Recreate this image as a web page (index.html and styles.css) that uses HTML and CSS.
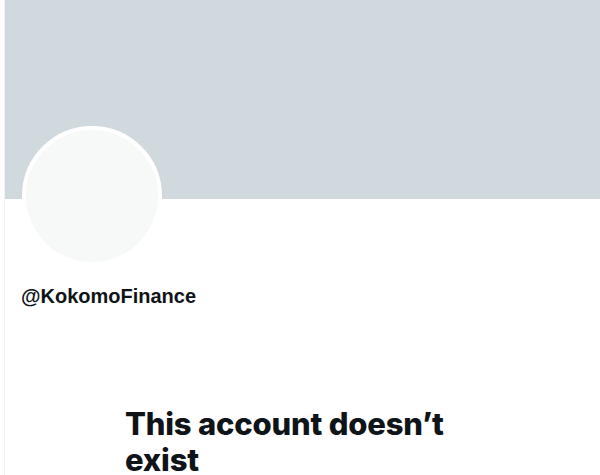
FILE: index.html
```html
<!DOCTYPE html>
<html lang="en">
<head>
	<meta charset="UTF-8">
	<title>Profile</title>
	<link rel="stylesheet" href="styles.css">
</head>
<body>
	<div class="column">
		<div class="banner"></div>
		<div class="profile">
			<div class="avatar"></div>
			<div class="handle">@KokomoFinance</div>
		</div>
		<div class="empty">
			<h1 class="empty_title">This account doesn’t exist</h1>
		</div>
	</div>
</body>
</html>
```

FILE: styles.css
```css
body{
	margin: 0px;
	padding: 0px;
	background-color: #FFFFFF;
	color: #0F1419;
	font-family: "Liberation Sans", Arial, sans-serif;
}

.column{
	margin-left: 4px;
	border-left: 1px solid #EFF3F4;
	min-height: 475px;
}

.banner{
	height: 199px;
	background-color: #CFD9DE;
}

.profile{
	padding: 0px 16px;
}

.avatar{
	width: 140px;
	height: 140px;
	box-sizing: border-box;
	margin-top: -73px;
	margin-left: 1px;
	border: 4px solid #FFFFFF;
	border-radius: 50%;
	background-color: #F7F9F9;
}

.handle{
	margin-top: 18px;
	font-size: 20px;
	line-height: 24px;
	font-weight: bold;
}

.empty{
	margin-top: 98px;
	padding-left: 120px;
}

.empty_title{
	margin: 0px;
	max-width: 336px;
	font-family: Inter, "Noto Sans", sans-serif;
	font-size: 31px;
	line-height: 36px;
	font-weight: 800;
	letter-spacing: -0.2px;
}
```
